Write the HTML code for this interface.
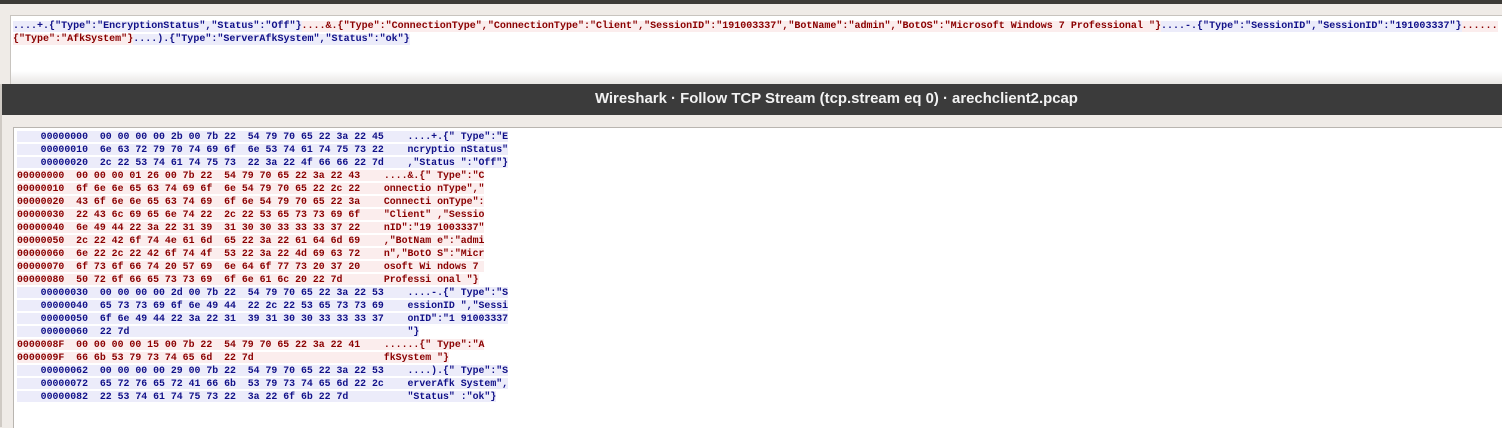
<!DOCTYPE html>
<html><head><meta charset="utf-8"><style>
body{margin:0;width:1502px;height:427px;overflow:hidden;background:#efebe7;position:relative;font-family:"Liberation Mono",monospace;}
.topbar{position:absolute;left:0;top:0;width:1502px;height:4px;background:#3c3b37}
.ta{position:absolute;left:10px;top:15px;width:1492px;height:70px;background:linear-gradient(#fff 0,#fff 55px,#e4e2df 70px);border-left:1px solid #c8c4bf;border-top:1px solid #c8c4bf}
.title{position:absolute;left:2px;top:84px;width:1500px;height:31px;background:#3b3b3b;color:#f2f2f2;font:bold 14.9px "Liberation Sans",sans-serif;line-height:31px;box-sizing:border-box;padding-left:593px;white-space:nowrap}
.lstripe{position:absolute;left:0;top:84px;width:2px;height:343px;background:#cfcac4}
.panel{position:absolute;left:13px;top:127px;width:1489px;height:300px;background:#fff;border-left:1px solid #b9b5b0;border-top:1px solid #b9b5b0}
pre{margin:0;font-family:"Liberation Mono",monospace;font-weight:bold;font-size:9.87px;line-height:13px;white-space:pre}
.b{color:#101088;background:#ececfa}
.r{color:#8a0000;background:#fbeded}
.top{position:absolute;left:2px;top:4px;font-size:10.02px}
.hex{position:absolute;left:3px;top:2px}
</style></head><body>
<div class="topbar"></div>
<div class="ta"><pre class="top"><span class="b">....+.{"Type":"EncryptionStatus","Status":"Off"}</span><span class="r">....&amp;.{"Type":"ConnectionType","ConnectionType":"Client","SessionID":"191003337","BotName":"admin","BotOS":"Microsoft Windows 7 Professional "}</span><span class="b">....-.{"Type":"SessionID","SessionID":"191003337"}</span><span class="r">......</span>
<span class="r">{"Type":"AfkSystem"}</span><span class="b">....).{"Type":"ServerAfkSystem","Status":"ok"}</span></pre></div>
<div class="lstripe"></div>
<div class="title">Wireshark · Follow TCP Stream (tcp.stream eq 0) · arechclient2.pcap</div>
<div class="panel"><pre class="hex"><span class="b">    00000000  00 00 00 00 2b 00 7b 22  54 79 70 65 22 3a 22 45    ....+.{" Type":"E</span>
<span class="b">    00000010  6e 63 72 79 70 74 69 6f  6e 53 74 61 74 75 73 22    ncryptio nStatus"</span>
<span class="b">    00000020  2c 22 53 74 61 74 75 73  22 3a 22 4f 66 66 22 7d    ,"Status ":"Off"}</span>
<span class="r">00000000  00 00 00 01 26 00 7b 22  54 79 70 65 22 3a 22 43    ....&amp;.{" Type":"C</span>
<span class="r">00000010  6f 6e 6e 65 63 74 69 6f  6e 54 79 70 65 22 2c 22    onnectio nType","</span>
<span class="r">00000020  43 6f 6e 6e 65 63 74 69  6f 6e 54 79 70 65 22 3a    Connecti onType":</span>
<span class="r">00000030  22 43 6c 69 65 6e 74 22  2c 22 53 65 73 73 69 6f    "Client" ,"Sessio</span>
<span class="r">00000040  6e 49 44 22 3a 22 31 39  31 30 30 33 33 33 37 22    nID":"19 1003337"</span>
<span class="r">00000050  2c 22 42 6f 74 4e 61 6d  65 22 3a 22 61 64 6d 69    ,"BotNam e":"admi</span>
<span class="r">00000060  6e 22 2c 22 42 6f 74 4f  53 22 3a 22 4d 69 63 72    n","BotO S":"Micr</span>
<span class="r">00000070  6f 73 6f 66 74 20 57 69  6e 64 6f 77 73 20 37 20    osoft Wi ndows 7 </span>
<span class="r">00000080  50 72 6f 66 65 73 73 69  6f 6e 61 6c 20 22 7d       Professi onal "}</span>
<span class="b">    00000030  00 00 00 00 2d 00 7b 22  54 79 70 65 22 3a 22 53    ....-.{" Type":"S</span>
<span class="b">    00000040  65 73 73 69 6f 6e 49 44  22 2c 22 53 65 73 73 69    essionID ","Sessi</span>
<span class="b">    00000050  6f 6e 49 44 22 3a 22 31  39 31 30 30 33 33 33 37    onID":"1 91003337</span>
<span class="b">    00000060  22 7d                                               "}</span>
<span class="r">0000008F  00 00 00 00 15 00 7b 22  54 79 70 65 22 3a 22 41    ......{" Type":"A</span>
<span class="r">0000009F  66 6b 53 79 73 74 65 6d  22 7d                      fkSystem "}</span>
<span class="b">    00000062  00 00 00 00 29 00 7b 22  54 79 70 65 22 3a 22 53    ....).{" Type":"S</span>
<span class="b">    00000072  65 72 76 65 72 41 66 6b  53 79 73 74 65 6d 22 2c    erverAfk System",</span>
<span class="b">    00000082  22 53 74 61 74 75 73 22  3a 22 6f 6b 22 7d          "Status" :"ok"}</span></pre></div>
</body></html>
